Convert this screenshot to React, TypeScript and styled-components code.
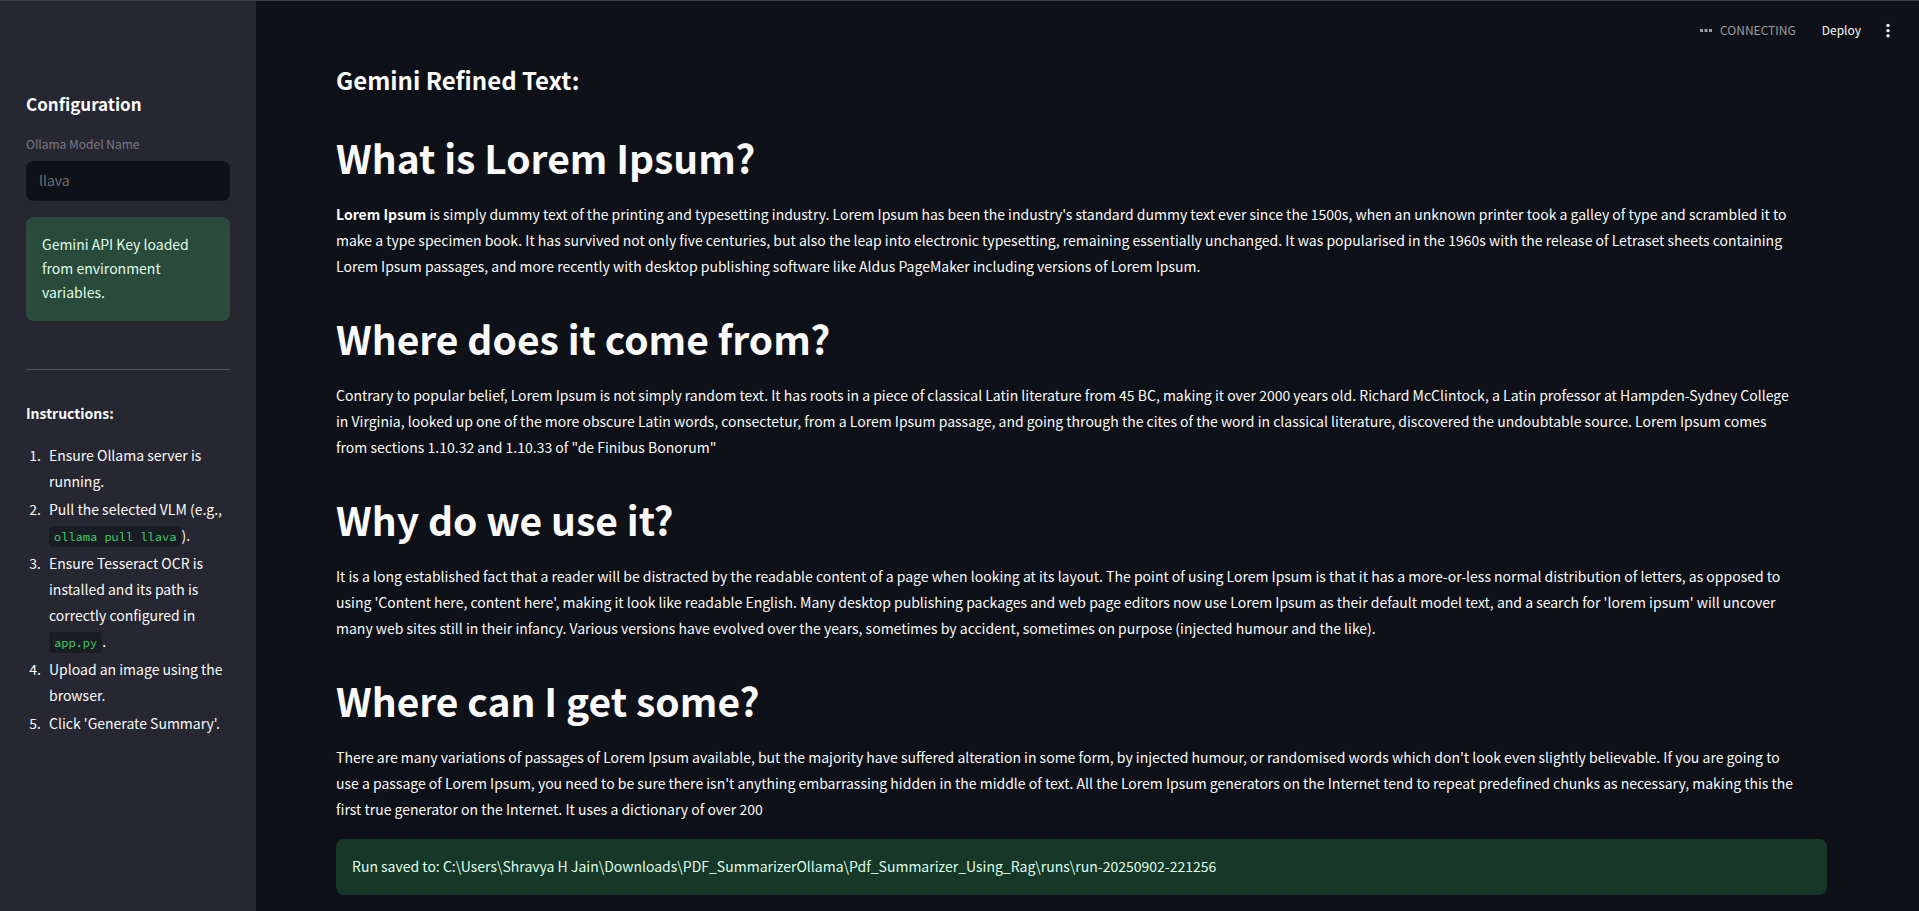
import React from 'react';
import styled, { createGlobalStyle } from 'styled-components';

const GlobalStyle = createGlobalStyle`
  *, *::before, *::after { box-sizing: border-box; }
  body {
    margin: 0;
    background: #0e1117;
    color: #fafafa;
    font-family: "Source Sans Pro", "Noto Sans CJK SC", sans-serif;
    font-size: 14px;
    line-height: 26px;
  }
`;

const Page = styled.div`
  display: flex;
  min-height: 100vh;
  border-top: 1px solid #3c413f;
`;

const Sidebar = styled.aside`
  flex: 0 0 256px;
  padding: 88px 26px 24px;
  background: #262730;
`;

const SidebarTitle = styled.h2`
  margin: 0 0 14px;
  font-size: 17px;
  line-height: 30px;
  font-weight: 700;
`;

const Field = styled.div`
  display: flex;
  flex-direction: column;
  gap: 6px;
  margin-bottom: 16px;
`;

const FieldLabel = styled.label`
  font-size: 12px;
  line-height: 22px;
  color: rgba(250, 250, 250, 0.4);
`;

const TextInput = styled.input`
  width: 100%;
  height: 40px;
  padding: 0 13px 2px;
  border: 0;
  border-radius: 8px;
  background: #0e1117;
  color: rgba(250, 250, 250, 0.4);
  font: inherit;
`;

const Alert = styled.div<{ $spaced?: boolean }>`
  margin-top: ${(p) => (p.$spaced ? '17px' : '0')};
  padding: 15px 16px 17px;
  border-radius: 8px;
  background: rgba(61, 213, 109, 0.2);
  color: #dffde9;
  line-height: 24px;
`;

const Divider = styled.hr`
  height: 1px;
  margin: 48px 0 30px;
  border: 0;
  background: rgba(250, 250, 250, 0.2);
`;

const Instructions = styled.p`
  margin: 0 0 16px;
  font-weight: 700;
`;

const Steps = styled.ol`
  display: flex;
  flex-direction: column;
  gap: 2px;
  margin: 0;
  padding: 0 0 0 18px;
`;

const Step = styled.li`
  padding-left: 5px;
`;

const Code = styled.code`
  padding: 3px 5px;
  border-radius: 4px;
  background: #1a1c24;
  color: #3dd56d;
  font-family: "Source Code Pro", "DejaVu Sans Mono", monospace;
  font-size: 12px;
  line-height: 16px;
`;

const Main = styled.main`
  flex: 1;
  min-width: 0;
`;

const Toolbar = styled.header`
  display: flex;
  align-items: center;
  justify-content: flex-end;
  height: 60px;
  padding: 0 22px 2px 0;
  font-size: 12px;
`;

const Status = styled.div`
  display: flex;
  align-items: center;
  gap: 8px;
  margin-right: 26px;
  color: rgba(250, 250, 250, 0.6);
`;

const ToolButton = styled.button`
  display: flex;
  padding: 0;
  border: 0;
  background: none;
  color: #fafafa;
  font: inherit;
  cursor: pointer;
`;

const MenuButton = styled(ToolButton)`
  margin-left: 18px;
`;

const Content = styled.div`
  padding: 2px 92px 14px 80px;
`;

const Title = styled.h3`
  margin: 0 0 15px;
  font-size: 24px;
  line-height: 34px;
  font-weight: 600;
`;

const Heading = styled.h1`
  margin: 0;
  padding: 19px 0 17px;
  font-size: 39px;
  line-height: 53px;
  font-weight: 700;
`;

const Section = styled.section`
  & + & { margin-top: 14px; }
`;

const Paragraph = styled.p`
  margin: 0;
  padding-right: 30px;
`;

const sections: { heading: string; body: React.ReactNode }[] = [
  {
    heading: 'What is Lorem Ipsum?',
    body: (
      <>
        <strong>Lorem Ipsum</strong> is simply dummy text of the printing and typesetting industry. Lorem Ipsum has been the industry's standard dummy text ever since the 1500s, when an unknown printer took a galley of type and scrambled it to make a type specimen book. It has survived not only five centuries, but also the leap into electronic typesetting, remaining essentially unchanged. It was popularised in the 1960s with the release of Letraset sheets containing Lorem Ipsum passages, and more recently with desktop publishing software like Aldus PageMaker including versions of Lorem Ipsum.
      </>
    ),
  },
  {
    heading: 'Where does it come from?',
    body: 'Contrary to popular belief, Lorem Ipsum is not simply random text. It has roots in a piece of classical Latin literature from 45 BC, making it over 2000 years old. Richard McClintock, a Latin professor at Hampden-Sydney College in Virginia, looked up one of the more obscure Latin words, consectetur, from a Lorem Ipsum passage, and going through the cites of the word in classical literature, discovered the undoubtable source. Lorem Ipsum comes from sections 1.10.32 and 1.10.33 of "de Finibus Bonorum"',
  },
  {
    heading: 'Why do we use it?',
    body: "It is a long established fact that a reader will be distracted by the readable content of a page when looking at its layout. The point of using Lorem Ipsum is that it has a more-or-less normal distribution of letters, as opposed to using 'Content here, content here', making it look like readable English. Many desktop publishing packages and web page editors now use Lorem Ipsum as their default model text, and a search for 'lorem ipsum' will uncover many web sites still in their infancy. Various versions have evolved over the years, sometimes by accident, sometimes on purpose (injected humour and the like).",
  },
  {
    heading: 'Where can I get some?',
    body: "There are many variations of passages of Lorem Ipsum available, but the majority have suffered alteration in some form, by injected humour, or randomised words which don't look even slightly believable. If you are going to use a passage of Lorem Ipsum, you need to be sure there isn't anything embarrassing hidden in the middle of text. All the Lorem Ipsum generators on the Internet tend to repeat predefined chunks as necessary, making this the first true generator on the Internet. It uses a dictionary of over 200",
  },
];

export default function App() {
  return (
    <>
      <GlobalStyle />
      <Page>
        <Sidebar>
          <SidebarTitle>Configuration</SidebarTitle>
          <Field>
            <FieldLabel htmlFor="model">Ollama Model Name</FieldLabel>
            <TextInput id="model" type="text" defaultValue="llava" disabled />
          </Field>
          <Alert role="alert">Gemini API Key loaded from environment variables.</Alert>
          <Divider />
          <Instructions>Instructions:</Instructions>
          <Steps>
            <Step>Ensure Ollama server is running.</Step>
            <Step>Pull the selected VLM (e.g., <Code>ollama pull llava</Code>).</Step>
            <Step>Ensure Tesseract OCR is installed and its path is correctly configured in <Code>app.py</Code>.</Step>
            <Step>Upload an image using the browser.</Step>
            <Step>Click 'Generate Summary'.</Step>
          </Steps>
        </Sidebar>
        <Main>
          <Toolbar>
            <Status>
              <svg width="12" height="3" viewBox="0 0 12 3" fill="currentColor" aria-hidden="true">
                <path d="M0 0h3v3H0zM4.5 0h3v3h-3zM9 0h3v3H9z" />
              </svg>
              CONNECTING
            </Status>
            <ToolButton type="button">Deploy</ToolButton>
            <MenuButton type="button" aria-label="Main menu">
              <svg width="18" height="18" viewBox="0 0 18 18" fill="currentColor" aria-hidden="true">
                <circle cx="9" cy="4.4" r="1.7" />
                <circle cx="9" cy="9.6" r="1.7" />
                <circle cx="9" cy="14.8" r="1.7" />
              </svg>
            </MenuButton>
          </Toolbar>
          <Content>
            <Title>Gemini Refined Text:</Title>
            {sections.map((s) => (
              <Section key={s.heading}>
                <Heading>{s.heading}</Heading>
                <Paragraph>{s.body}</Paragraph>
              </Section>
            ))}
            <Alert role="alert" $spaced>
              Run saved to: C:\Users\Shravya H Jain\Downloads\PDF_SummarizerOllama\Pdf_Summarizer_Using_Rag\runs\run-20250902-221256
            </Alert>
          </Content>
        </Main>
      </Page>
    </>
  );
}
